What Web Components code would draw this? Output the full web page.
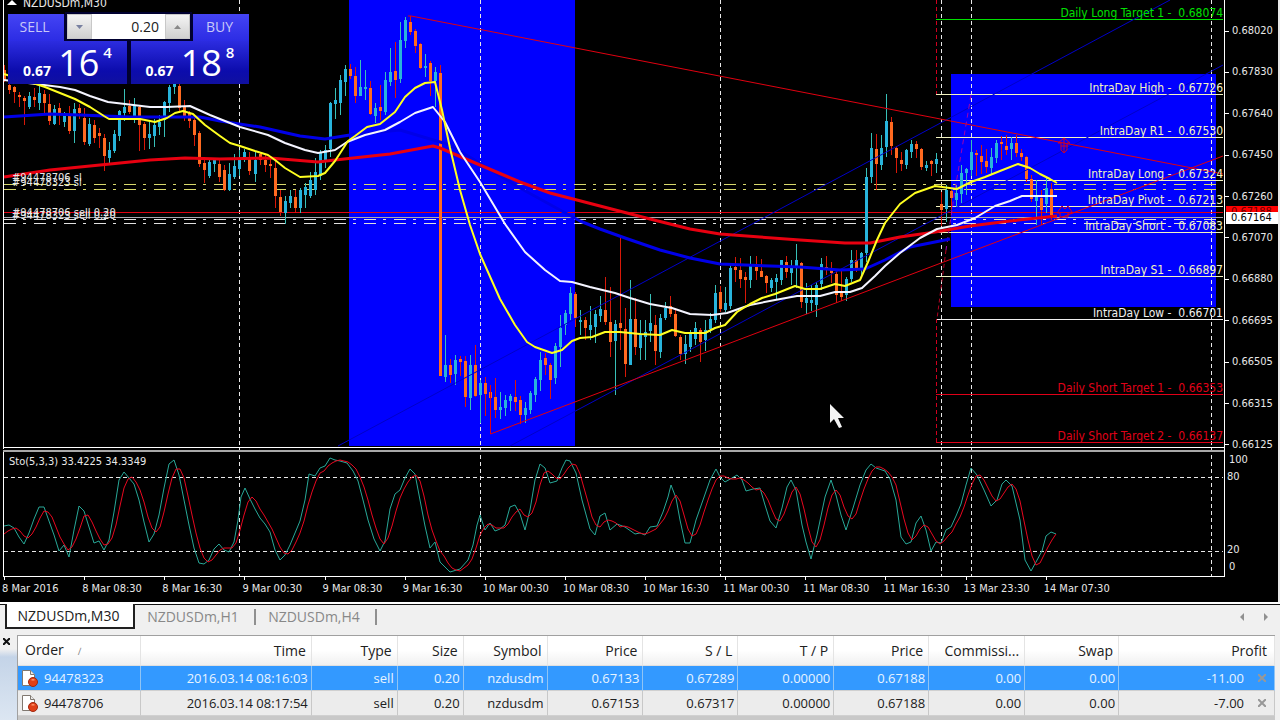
<!DOCTYPE html>
<html lang="en">
<head>
<meta charset="utf-8">
<title>NZDUSDm,M30</title>
<style>
  html, body { margin: 0; height: 100%; background: #f0f0f0; }
  body { font-family: "Open Sans", "Noto Sans", sans-serif; font-size: 13px; }
</style>
</head>
<body>
<trading-terminal></trading-terminal>
<script>
const CHART_FONT = '"DejaVu Sans Condensed", "Noto Sans", sans-serif';

function define(name, html, setup) {
  const template = document.createElement('template');
  template.innerHTML = html;
  customElements.define(name, class extends HTMLElement {
    constructor() {
      super();
      this.attachShadow({ mode: 'open' }).append(template.content.cloneNode(true));
    }
    connectedCallback() { if (setup) setup(this, this.shadowRoot); }
  });
}

/* Candles, one per 30 minutes: high, low, body top, body bottom, u(p) or d(own) */
const CANDLES = `65 82 70 80 d|84 94 85 90 d|86 103 87 92 d|92 107 95 97 d|96 125 98 101 d|92 109 96 107 u|88 107 97 100 d|84 110 93 103 u|90 113 94 103 d|94 125 104 121 d|105 125 109 124 u|103 125 108 114 d|112 127 114 122 u|106 134 114 131 d|103 143 109 131 u|104 119 108 113 d|108 145 118 142 d|118 146 124 144 u|120 143 125 138 d|128 148 133 136 d|134 171 138 156 d|142 165 150 158 u|130 153 134 151 u|110 141 111 136 u|89 121 107 113 u|100 114 106 112 d|98 123 105 116 u|105 151 107 125 d|122 150 124 138 d|122 149 134 138 u|119 147 125 136 u|115 135 122 127 u|101 137 102 120 u|85 112 87 103 u|82 94 84 87 u|84 113 86 108 d|100 121 107 117 d|111 128 113 121 d|116 146 120 135 d|131 167 133 164 d|157 183 163 170 d|158 178 162 176 u|160 172 160 164 u|160 182 164 177 d|165 191 170 190 d|163 191 174 190 u|154 179 166 177 u|150 176 159 169 u|149 162 152 158 u|152 175 159 171 d|151 182 160 174 u|153 165 154 160 d|155 172 160 165 d|158 178 164 166 d|160 208 168 196 d|190 216 197 212 d|196 224 201 213 u|190 208 196 203 u|190 213 197 208 d|188 213 190 208 u|183 208 187 195 u|172 198 180 196 u|158 195 172 190 u|150 180 152 176 u|145 168 150 160 u|102 157 103 149 u|88 119 100 104 u|75 115 80 103 u|65 96 69 82 u|64 79 69 76 d|67 103 76 96 d|60 96 87 96 u|70 100 87 89 u|81 115 88 114 d|103 123 108 116 u|85 120 107 111 d|72 115 80 112 u|48 86 72 82 u|42 98 71 80 d|22 83 40 79 u|17 48 20 41 u|16 35 22 32 d|29 53 31 46 d|43 69 44 68 d|54 77 66 68 u|61 96 63 81 d|67 107 72 81 u|65 376 73 376 d|335 382 365 377 u|359 383 365 375 d|355 385 360 374 u|356 376 359 362 d|356 407 361 397 d|355 410 365 398 u|345 397 365 396 d|380 423 383 395 u|377 416 383 394 d|385 433 392 398 d|378 418 397 410 d|392 419 407 410 u|395 416 400 408 u|394 411 396 401 u|380 411 397 402 d|396 424 400 415 d|402 423 408 415 u|391 414 393 410 u|377 402 379 395 u|352 391 360 380 u|353 375 358 365 d|363 399 365 380 d|343 384 346 378 u|315 367 328 347 u|310 335 313 325 u|287 320 293 314 u|292 327 294 318 d|310 335 320 322 u|317 340 320 328 d|306 340 325 330 u|310 343 314 327 u|296 322 309 316 u|277 325 310 322 d|287 357 322 342 d|320 395 324 341 u|237 350 323 328 d|308 377 329 364 d|280 365 319 365 u|298 355 319 347 d|320 360 335 348 u|320 360 332 337 u|294 342 323 331 u|315 365 325 351 d|314 358 318 352 u|302 320 308 318 u|296 317 306 314 d|310 337 314 336 d|335 360 337 354 d|335 364 344 354 u|330 352 333 347 u|322 345 328 339 u|328 362 330 342 d|320 351 330 340 u|313 333 319 329 u|285 323 293 320 u|286 312 292 309 d|287 312 303 310 u|263 309 268 306 u|257 282 267 270 d|258 288 270 279 d|272 303 277 280 d|256 288 264 280 u|256 280 267 271 d|259 277 271 277 d|275 293 276 283 d|278 292 280 288 u|274 300 278 282 u|260 285 260 280 u|256 278 262 272 d|260 285 266 273 u|244 288 260 267 u|262 308 263 302 d|283 314 298 303 u|285 311 300 303 u|282 317 285 305 u|258 290 264 284 u|256 275 267 270 d|262 283 268 273 d|272 303 274 295 d|270 301 293 297 d|277 301 279 295 u|250 282 260 279 u|250 272 260 268 d|252 276 253 268 u|168 262 177 253 u|133 183 148 177 u|134 190 149 164 d|135 170 148 165 u|94 157 121 147 u|117 155 122 146 d|146 173 148 158 d|152 171 160 164 d|149 169 150 165 u|140 158 144 152 u|141 158 144 149 d|148 170 149 167 d|161 171 165 168 u|160 176 161 164 d|153 173 159 164 u|192 226 204 210 d|185 222 190 209 u|190 212 191 198 d|185 207 193 200 u|165 203 173 194 u|168 195 169 173 u|140 176 152 170 u|150 176 153 155 d|145 174 156 162 d|149 173 161 167 d|148 174 157 168 u|140 163 143 158 u|136 160 142 144 d|135 155 146 150 d|137 160 143 149 u|135 157 143 153 d|149 161 153 157 d|156 182 157 179 d|175 202 179 199 d|180 225 196 201 u|190 225 198 210 d|178 213 188 204 u|183 220 189 215 d`;

const MA_BLUE = '4,117 50,114 80,115 130,117 165,117 200,117 220,121 260,127 300,136 325,139 350,135 400,130 450,145 520,188 580,221 600,229 625,238 660,250 690,258 720,264 770,266 800,267 840,270 865,269 885,260 910,247 950,239';
const MA_RED = '4,177 50,170 100,165 150,160 185,158 220,159 270,158 318,162 335,160 390,154 433,146 440,148 480,165 520,182 550,193 600,206 650,219 690,229 720,234 760,237 800,240 845,243 870,243 900,237 935,232 970,226 1010,221 1057,216';
const MA_WHITE = '4,80 60,87 75,90 90,96 108,102 125,104 150,107 167,107 190,106 210,115 240,127 268,135 285,143 305,150 318,153 335,150 347,142 365,135 385,130 400,122 415,113 433,107 445,122 460,152 480,182 505,224 525,252 545,270 560,281 572,282 590,287 615,293 630,298 650,304 672,308 690,314 712,315 727,313 750,305 775,300 797,296 820,296 835,292 850,292 862,288 875,276 885,266 900,253 920,238 937,229 957,225 975,218 995,206 1010,201 1022,196 1057,196';
const MA_YELLOW = '4,74 30,82 45,87 60,93 75,99 90,107 104,116 109,119 125,119 140,119 155,122 167,118 175,113 183,111 193,114 205,125 220,136 230,143 240,146 255,151 268,155 275,160 285,168 300,177 318,176 325,173 335,161 348,141 355,136 367,127 380,124 395,112 405,97 415,88 425,83 435,82 442,110 450,148 460,190 470,225 480,254 500,299 515,325 527,342 535,347 552,353 562,350 572,341 580,338 592,337 605,332 620,332 640,334 660,335 672,330 685,333 705,333 715,328 725,325 737,312 750,304 762,298 775,294 795,286 805,289 820,289 835,284 845,286 860,280 868,262 877,240 885,223 900,204 915,193 935,186 957,189 971,182 985,177 1000,171 1018,164 1030,168 1040,174 1050,179 1057,183';

const STOCHASTIC = '4,526 9,525 14,528 19,537 24,544 29,533 34,519 39,507 44,507 49,521 54,535 59,551 64,545 69,557 74,530 79,506 84,511 89,527 94,543 99,541 104,550 109,540 114,512 119,480 124,472 129,478 134,484 139,500 144,522 149,542 154,534 159,515 164,488 169,464 174,460 179,475 184,500 189,525 194,548 199,563 204,564 209,560 214,549 219,544 224,550 229,552 234,542 238,520 241,497 245,488 250,499 255,509 260,518 265,524 270,532 275,550 280,560 285,555 290,545 295,533 300,521 305,500 309,474 315,476 320,468 325,466 330,458 335,460 340,461 347,463 353,471 358,481 363,500 368,520 374,539 380,551 385,541 390,509 395,494 400,490 405,478 410,469 415,474 420,500 425,526 430,548 435,542 440,562 450,572 460,569 468,560 473,545 477,525 480,515 485,530 490,523 495,531 500,529 505,525 510,507 515,505 520,514 525,530 530,510 535,480 540,464 545,468 550,483 557,481 562,468 566,460 570,461 576,473 582,500 590,529 595,535 600,516 605,513 610,530 617,524 625,527 635,534 640,533 645,535 650,527 657,526 663,512 668,497 671,485 676,498 680,520 685,543 690,543 696,520 703,500 710,480 716,469 720,477 725,482 732,478 737,475 742,480 746,491 753,489 760,488 765,505 770,521 776,528 782,508 787,487 791,480 796,490 802,525 806,542 811,559 817,535 825,497 831,480 836,495 841,515 846,530 853,508 860,485 866,470 871,464 876,468 885,471 890,479 896,500 901,537 906,544 911,542 916,523 921,516 926,530 931,551 936,542 941,543 946,530 951,527 956,516 961,504 966,485 971,468 977,475 984,490 991,506 997,500 1002,484 1006,480 1012,486 1020,520 1025,560 1031,571 1036,562 1042,551 1046,536 1051,532 1056,534';

/* Signal line: three-period average of the main line */
function signalLine(points) {
  const p = points.split(' ').map(s => s.split(',').map(Number));
  const at = x => {
    if (x <= p[0][0]) return p[0][1] + 8;
    const i = p.findIndex(q => q[0] >= x);
    const [x0, y0] = p[i - 1], [x1, y1] = p[i];
    return y0 + (y1 - y0) * (x - x0) / (x1 - x0);
  };
  const out = [];
  for (let x = 4; x <= 1056; x += 4) out.push(x + ',' + Math.round((at(x) + at(x - 5) + at(x - 10)) / 3));
  return out.join(' ');
}

function candleShapes() {
  return CANDLES.split('|').map((row, i) => {
    const [hi, lo, top, bottom, dir] = row.split(' ');
    const x = Math.round(4 + i * 5.01);
    return `<path class="w${dir}" d="M${x} ${hi}h1V${lo}h-1z"/><path class="b${dir}" d="M${x - 1} ${top}h3V${bottom}h-3z"/>`;
  }).join('');
}

const LEVELS = [
  ['Daily Long Target 1', '0.68074', 19, '#00e000'],
  ['IntraDay High', '0.67726', 94, '#f4f4c0'],
  ['IntraDay R1', '0.67530', 137, '#f4f4c0'],
  ['IntraDay Long', '0.67324', 180, '#f4f4c0'],
  ['IntraDay Pivot', '0.67213', 206, '#f4f4c0'],
  ['IntraDay Short', '0.67083', 232, '#f4f4c0'],
  ['IntraDay S1', '0.66897', 276, '#f4f4c0'],
  ['IntraDay Low', '0.66701', 319, '#f0f0f0'],
  ['Daily Short Target 1', '0.66353', 394, '#e00018'],
  ['Daily Short Target 2', '0.66137', 442, '#e00018']
];

define('chart-plot', `
<style>
  :host { display: block; position: relative; overflow: hidden; font: 11px/12px ${CHART_FONT}; color: #e8e8e8; }
  svg { display: block; width: 100%; height: 100%; }
  .wu { fill: #38c0b8; } .wd { fill: #d81808; }
  .bu { fill: #28b4dc; } .bd { fill: #ff6a20; }
  .ma { fill: none; stroke-width: 3; stroke-linejoin: round; }
  .fast { stroke-width: 2; }
  .thin { fill: none; stroke-width: 1; }
  .grid { stroke: #e8e8e8; stroke-dasharray: 4 3; }
  .order { stroke-dasharray: 12 7 3 8; }
  .label { position: absolute; white-space: pre; }
  .level { right: 1px; }
  .level, .title { font-size: 12px; }
  .pointer { position: absolute; left: 67.8%; top: 70%; width: 15px; height: 26px; }
</style>
<svg viewBox="0 0 1224 577" preserveAspectRatio="none" aria-hidden="true">
  <g shape-rendering="crispEdges">
    <path fill="#0000ff" d="M349 0h226v446H349zM951 74h265v233H951z"/>
    <g class="grid" fill="none">
      <path d="M239.500 0V576M480.500 0V576M720.500 0V576M941.500 0V576M971.500 0V576M1211.500 0V576"/>
      <path d="M4 477.500H1223M4 551.500H1223"/>
    </g>
    <path class="thin order" stroke="#d8d86c" d="M4 184.500H1216M4 189.500H1216"/>
    <path class="thin order" stroke="#e0e0e0" d="M4 219.500H1216M4 223.500H1216"/>
    <path class="thin" stroke="#e00010" d="M4 212.500H1223"/>
    <path class="thin" stroke="#a8a8b0" d="M4 217.500H1223"/>
    <g id="levels"></g>
    <g id="candles"></g>
  </g>
  <path class="thin" stroke="#0000c8" d="M338 446L1170 0M510 446L1223 65"/>
  <path class="thin" stroke="#d00020" stroke-dasharray="4 3" d="M936.500 0V94M936.500 319V442"/>
  <path class="thin" stroke="#a000b0" stroke-dasharray="5 4" d="M971 95L955 190L946 250"/>
  <path class="thin" stroke="#b00020" stroke-dasharray="4 3" d="M946 250L937 319"/>
  <polyline class="ma" stroke="#0000e8" points="${MA_BLUE}"/>
  <polyline class="ma" stroke="#e80010" points="${MA_RED}"/>
  <polyline class="ma fast" stroke="#f4f4ff" points="${MA_WHITE}"/>
  <polyline class="ma fast" stroke="#ffff20" points="${MA_YELLOW}"/>
  <path class="thin" stroke="#e00010" d="M408 16h3L1223 174M490.500 385V434L1223 156"/>
  <g class="thin" stroke="#d00028">
    <path d="M1061 150v-7h-3l6-5 6 5h-3v7l-3 3zM1061 146h7M1064 138v14"/>
    <path d="M1057 213l5-7 3 3 3-3 4 6-4 1v4h-8v-4z"/>
  </g>
  <polyline class="thin" stroke="#28a898" points="${STOCHASTIC}"/>
  <polyline class="thin" stroke="#e80820" points="${signalLine(STOCHASTIC)}"/>
  <g shape-rendering="crispEdges">
    <path fill="#fff" d="M3 0h1V449h-1zM3 447H1224v1H3zM3 450h1V576h-1zM3 576H1224v1H3z"/>
    <path fill="#a8a8a8" d="M3 450H1224v2H3z"/>
  </g>
</svg>
<svg class="pointer" viewBox="0 0 15 26" aria-hidden="true"><path fill="#f4f4f4" d="M0 0v19l4-4 5 9 3-1-4-9h6z"/></svg>
<div id="labels"></div>
`, (host, root) => {
  root.getElementById('candles').innerHTML = candleShapes();
  root.getElementById('levels').innerHTML = LEVELS.map(l =>
    `<path fill="${l[3]}" d="M936 ${l[2]}H1223v1H936z"/>`).join('');
  const place = (text, left, middle, kind = '') =>
    `<span class="label ${kind}" style="left:${left}px;top:calc(${middle / 5.77}% - 6px)">${text}</span>`;
  root.getElementById('labels').innerHTML =
    LEVELS.map(l => `<span class="label level" style="color:${l[3]};bottom:${100 - l[2] / 5.77}%">${l[0]} -  ${l[1]}</span>`).join('') +
    place('#94478706 sl', 12, 178) + place('#94478323 sl', 12, 183) +
    place('#94478706 sell 0.20', 12, 213) + place('#94478323 sell 0.20', 12, 216) +
    place('Sto(5,3,3) 33.4225 34.3349', 9, 462) +
    place('NZDUSDm,M30', 23, 3, 'title') +
    `<svg class="label" style="left:7px;top:0;width:10px;height:6px" viewBox="0 0 10 6"><path fill="#fff" d="M5 0l5 5H0z"/></svg>`;
});

define('price-axis', `
<style>
  :host { display: flex; flex-direction: column; justify-content: space-between; position: relative;
    border-left: 1px solid #fff; padding-top: 25px; margin-bottom: -2px; }
  span { display: flex; align-items: center; gap: 3px; height: 12px; }
  span::before { content: ""; width: 4px; height: 1px; background: #fff; }
  .ask, .bid { position: absolute; left: 1px; right: 0; padding-left: 5px; height: 12px; }
  .ask { top: calc(47% - 6px); background: #f00; color: #600; }
  .bid { top: 47%; background: #fff; color: #000; }
</style>
<div class="ask">0.67188</div><div class="bid">0.67164</div>
`, (host, root) => {
  for (const p of ['0.68020', '0.67830', '0.67640', '0.67450', '0.67260', '0.67070', '0.66880', '0.66695', '0.66505', '0.66315', '0.66125']) {
    const s = document.createElement('span');
    s.textContent = p;
    root.insertBefore(s, root.querySelector('.ask'));
  }
});

define('oscillator-axis', `
<style>
  :host { display: flex; flex-direction: column; justify-content: space-between; border-left: 1px solid #fff; padding: 5px 0 4px; }
  div { display: flex; flex-direction: column; gap: 5px; padding-left: 2px; }
  .edge { padding-left: 2px; }
</style>
<div><span class="edge">100</span><span>80</span></div>
<div><span>20</span><span class="edge">0</span></div>
`);

define('time-axis', `
<style>
  :host { display: grid; grid-template-columns: repeat(16, minmax(0, 1fr)); margin-right: -6px; padding-left: 2px; overflow: hidden; }
  span { white-space: nowrap; }
  span::before { content: ""; display: block; width: 1px; height: 3px; margin: 0 0 3px 2px; background: #fff; }
</style>
`, (host, root) => {
  for (const t of ['8 Mar 2016', '8 Mar 08:30', '8 Mar 16:30', '9 Mar 00:30', '9 Mar 08:30', '9 Mar 16:30', '10 Mar 00:30', '10 Mar 08:30', '10 Mar 16:30', '11 Mar 00:30', '11 Mar 08:30', '11 Mar 16:30', '13 Mar 23:30', '14 Mar 07:30']) {
    const s = document.createElement('span');
    s.textContent = t;
    root.append(s);
  }
});

define('quote-button', `
<style>
  :host { display: block; }
  button { display: flex; flex-direction: column; width: 100%; padding: 0; border: 0; background: none; color: #fff; font: inherit; cursor: pointer; }
  .tab { width: 56px; height: 27px; box-sizing: border-box; padding-right: 3px; font-size: 14px; line-height: 26px; text-align: center; color: #c8c8f8; background: linear-gradient(#4444f4, #2c2ce4); }
  :host([side="buy"]) .tab { align-self: flex-end; }
  .tile { display: flex; align-items: baseline; justify-content: center; gap: 7px; align-self: stretch; height: 43px; line-height: 44px;
    background: linear-gradient(#2c2ce0, #0c0cac 70%, #1010a0); }
  .small { font-size: 14px; font-weight: 700; }
  .big { font-size: 36px; }
  .tiny { font-size: 15px; font-weight: 600; line-height: 23px; align-self: flex-start; margin-left: -3px; }
</style>
<button type="button">
  <span class="tab"><slot></slot></span>
  <span class="tile"><span class="small"><slot name="small"></slot></span><span class="big"><slot name="big"></slot></span><span class="tiny"><slot name="tiny"></slot></span></span>
</button>
`);

define('one-click-panel', `
<style>
  :host { display: grid; grid-template-columns: 119px 118px; gap: 4px; font-family: "Open Sans", "Noto Sans", sans-serif; background: #000030; }
  .volume { position: absolute; left: 59px; top: 0; width: 123px; height: 25px; display: flex; background: #fff; outline: 2px solid #000030; }
  .volume button { width: 25px; padding: 0; border: 1px solid #c8c8c8; background: linear-gradient(#f4f4f4, #d0d0d0); display: grid; place-items: center; }
  .volume input { flex: 1; min-width: 0; border: 0; padding: 0 6px 0 0; text-align: right; font: 14px "Open Sans", "Noto Sans", sans-serif; color: #202020; background: #fff; }
</style>
<quote-button side="sell">SELL<span slot="small">0.67</span><span slot="big">16</span><span slot="tiny">4</span></quote-button>
<quote-button side="buy">BUY<span slot="small">0.67</span><span slot="big">18</span><span slot="tiny">8</span></quote-button>
<div class="volume">
  <button type="button" aria-label="Decrease volume"><svg width="7" height="4"><path fill="#7880a0" d="M0 0h7L3.500 4z"/></svg></button>
  <input type="text" value="0.20" aria-label="Volume">
  <button type="button" aria-label="Increase volume"><svg width="7" height="4"><path fill="#888" d="M0 4h7L3.500 0z"/></svg></button>
</div>
`);

define('price-chart', `
<style>
  :host { display: grid; grid-template-columns: minmax(0, 1fr) 54px; grid-template-rows: minmax(0, 449fr) minmax(0, 128fr) 25px;
    position: relative; overflow: hidden; background: #000; border-right: 2px solid #e8e8e8; color: #e8e8e8; font: 11px/12px ${CHART_FONT}; }
  chart-plot { grid-row: 1 / 3; }
  time-axis { grid-column: 1 / 3; }
  one-click-panel { position: absolute; left: 8px; top: 14px; }
</style>
<chart-plot></chart-plot>
<price-axis></price-axis>
<oscillator-axis></oscillator-axis>
<time-axis></time-axis>
<one-click-panel></one-click-panel>
`);

define('chart-tabs', `
<style>
  :host { display: block; border-top: 2px solid #fff; background: #f0f0f0; padding-bottom: 6px; }
  .bar { display: flex; height: 24px; border-top: 1px solid #101010; padding: 0 10px 0 5px; }
  button { border: 0; background: none; font: 14px/20px "Open Sans", "Noto Sans", sans-serif; color: #888; cursor: pointer; padding: 0; }
  .tabs { display: flex; flex: 1; align-items: center; }
  .tabs button { width: 121px; height: 16px; line-height: 16px; padding-right: 3px; border-right: 2px solid #909090; }
  .tabs button.active { width: 130px; line-height: 22px; align-self: stretch; margin-top: -1px; box-sizing: border-box; background: #fff; color: #202020; border: 2px solid #202020; border-top: 0; height: 25px; }
  .arrows { display: flex; gap: 16px; align-items: center; }
  .arrows button { display: grid; width: 7px; }
</style>
<div class="bar">
  <div class="tabs">
    <button type="button" class="active">NZDUSDm,M30</button>
    <button type="button">NZDUSDm,H1</button>
    <button type="button">NZDUSDm,H4</button>
  </div>
  <div class="arrows">
    <button type="button" aria-label="Previous tabs"><svg width="5" height="8"><path fill="#909090" d="M4 0v8L0 4z"/></svg></button>
    <button type="button" aria-label="Next tabs"><svg width="5" height="8"><path fill="#909090" d="M1 0v8l4-4z"/></svg></button>
  </div>
</div>
`);

const COLUMNS = [['Order', 123], ['Time', 171], ['Type', 86], ['Size', 66], ['Symbol', 84], ['Price', 96], ['S / L', 95], ['T / P', 96], ['Price', 95], ['Commissi...', 96], ['Swap', 94], ['Profit', 156]];
const ORDERS = [
  ['94478323', '2016.03.14 08:16:03', 'sell', '0.20', 'nzdusdm', '0.67133', '0.67289', '0.00000', '0.67188', '0.00', '0.00', '-11.00'],
  ['94478706', '2016.03.14 08:17:54', 'sell', '0.20', 'nzdusdm', '0.67153', '0.67317', '0.00000', '0.67188', '0.00', '0.00', '-7.00']
];
const ORDER_ICON = '<svg width="17" height="18" viewBox="0 0 17 18" aria-hidden="true"><path fill="#fff" stroke="#807870" d="M1.500 1.500h8l4 4v11h-12z"/><path fill="#e8e8e8" stroke="#807870" d="M9.500 1.500v4h4"/><circle cx="12" cy="13" r="4.500" fill="#e04018" stroke="#a02810"/><path fill="#ff9a70" d="M10 11q2-2 4 0q-2 1-4 0"/></svg>';

define('orders-table', `
<style>
  :host { display: grid; grid-template-columns: 17px minmax(0, 1fr) 5px; background: #f0f0f0; color: #202020; }
  .gutter { background: linear-gradient(#f0f0f0 14px, #c4d4e8 22px, #dce6f2); }
  .gutter button { display: grid; place-items: center; width: 13px; height: 13px; padding: 0; border: 0; background: none; }
  .panel { border-top: 1px solid #a0a0a0; border-left: 1px solid #a0a0a0; background: #c8c8c8; padding-bottom: 4px; }
  table { width: 100%; table-layout: fixed; border-collapse: separate; border-spacing: 0; }
  th, td { padding: 0 3px 0 0; text-align: right; font-weight: 400; white-space: nowrap; box-sizing: border-box; overflow: hidden; border-right: 1px solid #c8c8c8; }
  th { height: 30px; padding-right: 5px; font-size: 14px; line-height: 20px; background: linear-gradient(#fff 50%, #f0f0f0); border-right-color: #e4e4e4; border-bottom: 1px solid #e0e0e0; }
  td { height: 25px; background: #ececec; border-bottom: 1px solid #d0d0d0; }
  th:first-child { text-align: left; padding-left: 7px; }
  th:last-child { padding-right: 7px; }
  .sort { color: #888; margin-left: 14px; font-size: 10px; }
  .selected td { background: #3399ff; color: #e8f4ff; border-right-color: #90c4f4; }
  .id { display: flex; align-items: center; gap: 6px; padding-left: 3px; }
  .profit { display: flex; align-items: center; justify-content: flex-end; gap: 12px; padding-right: 3px; }
  .profit button { display: grid; place-items: center; width: 12px; height: 12px; padding: 0; border: 0; background: none; }
</style>
<div class="gutter"><button type="button" aria-label="Close terminal"><svg width="7" height="7"><path stroke="#101010" stroke-width="2" d="M0 0l7 7M7 0l-7 7"/></svg></button></div>
<div class="panel"><table><colgroup></colgroup><thead><tr></tr></thead><tbody></tbody></table></div>
`, (host, root) => {
  const total = COLUMNS.reduce((sum, c) => sum + c[1], 0);
  root.querySelector('colgroup').innerHTML = COLUMNS.map(c => `<col style="width:${c[1] / total * 100}%">`).join('');
  root.querySelector('thead tr').innerHTML = COLUMNS.map((c, i) => `<th scope="col">${c[0]}${i ? '' : '<span class="sort">∕</span>'}</th>`).join('');
  root.querySelector('tbody').innerHTML = ORDERS.map((o, r) => `<tr class="${r ? '' : 'selected'}">` + o.map((v, i) => {
    if (i === 0) return `<td><span class="id">${ORDER_ICON}${v}</span></td>`;
    if (i === 11) return `<td><span class="profit">${v}<button type="button" aria-label="Close order"><svg width="8" height="8"><path stroke="#989898" stroke-width="2" d="M0 0l8 8M8 0l-8 8"/></svg></button></span></td>`;
    return `<td>${v}</td>`;
  }).join('') + '</tr>').join('');
});

define('trading-terminal', `
<style>
  :host { display: grid; grid-template-rows: minmax(0, 1fr) auto auto; height: 100vh; overflow: hidden; }
</style>
<price-chart></price-chart>
<chart-tabs></chart-tabs>
<orders-table></orders-table>
`);
</script>
</body>
</html>
